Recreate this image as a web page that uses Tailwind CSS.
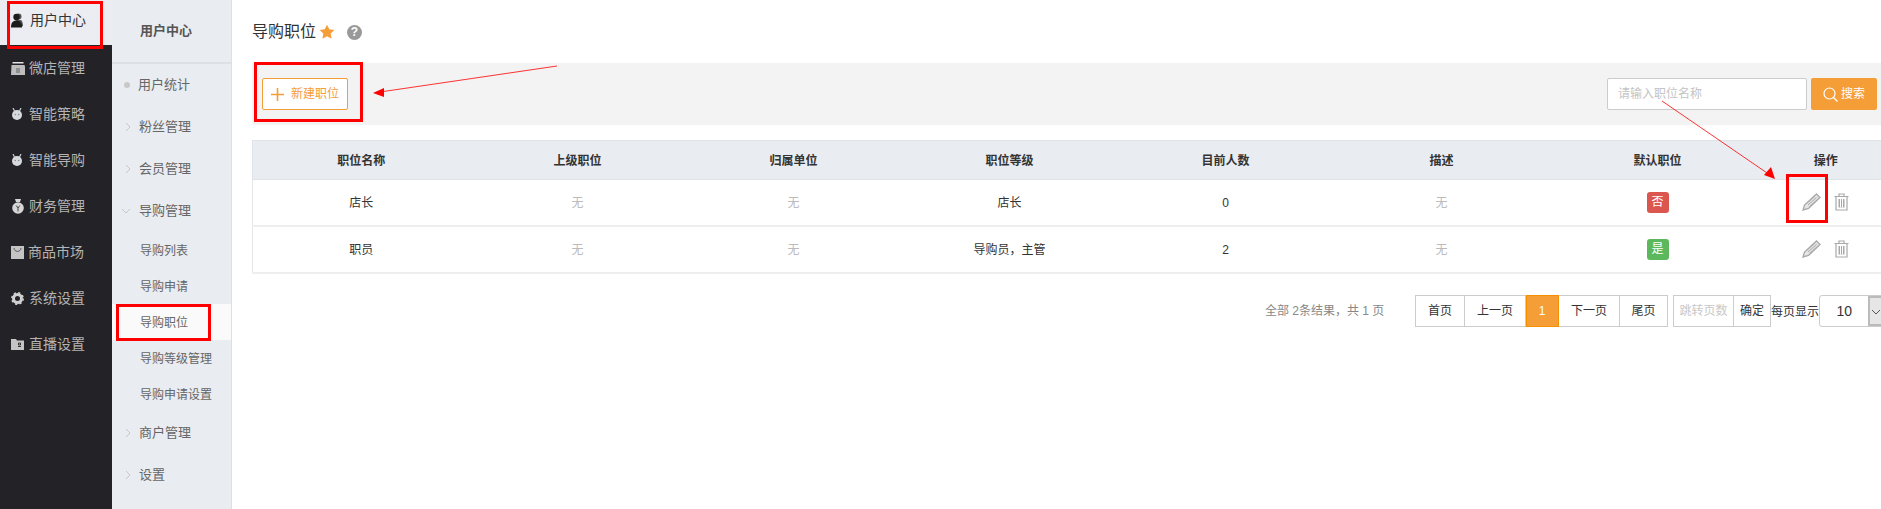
<!DOCTYPE html>
<html lang="zh-CN">
<head>
    <meta charset="UTF-8">
    <title>导购职位</title>
    <script src="https://cdn.jsdelivr.net/npm/@tailwindcss/browser@4"></script>
</head>
<body class="relative w-[1881px] h-[509px] overflow-hidden bg-white font-['Liberation_Sans','Noto_Sans_CJK_SC',sans-serif] text-[12px] text-[#333]">
<div class="flex h-[509px]">
    <!-- main nav -->
    <nav class="w-[112px] shrink-0 bg-[#232227] text-[14px] text-[#b4b4b4]">
        <div class="h-[45px] bg-[#ebedf2] flex items-center pl-[11px] pb-[5px] gap-[7px] text-[#333]">
            <svg class="w-[12px] h-[15px]" viewBox="0 0 12 15"><circle cx="7.500" cy="3.500" r="3" fill="#555"/><path d="M5 7h5c1.500 1 2 4 2 6l-2 1z" fill="#555"/><circle cx="5.500" cy="4" r="3.200" fill="#1c1c1c"/><path d="M0 14.500C0 9.500 2 7.500 5.500 7.500S11 9.500 11 14.500z" fill="#1c1c1c"/></svg>
            <span>用户中心</span>
        </div>
        <a class="h-[46px] flex items-center pl-[11px] gap-[4px]">
            <svg class="w-[14px] h-[13px]" viewBox="0 0 14 13"><path d="M1.500 0h11v1.500h-11z" fill="#e4e4e4"/><path d="M0.500 3h13l0.500 1.500v8.500H0z" fill="#bdbdbd"/><path d="M5 6h4v5H5z" fill="#8f8f8f"/></svg>
            <span>微店管理</span>
        </a>
        <a class="h-[46px] flex items-center pl-[12px] gap-[7px]">
            <svg class="w-[10px] h-[12px]" viewBox="0 0 10 12"><path d="M1 0l1.500 3M9 0L7.500 3" stroke="#c9ccd2" stroke-width="1.200"/><circle cx="5" cy="7" r="5" fill="#d6d9de"/><circle cx="3.300" cy="6.500" r=".8" fill="#8a8a8a"/><circle cx="6.700" cy="6.500" r=".8" fill="#8a8a8a"/></svg>
            <span>智能策略</span>
        </a>
        <a class="h-[46px] flex items-center pl-[12px] gap-[7px]">
            <svg class="w-[10px] h-[12px]" viewBox="0 0 10 12"><path d="M1 0l1.500 3M9 0L7.500 3" stroke="#c9ccd2" stroke-width="1.200"/><circle cx="5" cy="7" r="5" fill="#d6d9de"/><circle cx="3.300" cy="6.500" r=".8" fill="#8a8a8a"/><circle cx="6.700" cy="6.500" r=".8" fill="#8a8a8a"/></svg>
            <span>智能导购</span>
        </a>
        <a class="h-[46px] flex items-center pl-[12px] gap-[5px]">
            <svg class="w-[12px] h-[15px]" viewBox="0 0 12 15"><path d="M3 0h6L8 3H4z" fill="#d6d6d6"/><circle cx="6" cy="9" r="5.800" fill="#d6d6d6"/><path d="M4.200 6.500L6 9l1.800-2.500M6 9v3.500" stroke="#444" fill="none"/></svg>
            <span>财务管理</span>
        </a>
        <a class="h-[46px] flex items-center pl-[11px] gap-[4px]">
            <svg class="w-[13px] h-[13px]" viewBox="0 0 13 13"><path d="M0 0h13v13H0z" fill="#c4c4c4"/><path d="M3 2c0 4.500 7 4.500 7 0" stroke="#555" fill="none"/></svg>
            <span>商品市场</span>
        </a>
        <a class="h-[46px] flex items-center pl-[11px] gap-[5px]">
            <svg class="w-[13px] h-[13px]" viewBox="0 0 13 13"><circle cx="6.500" cy="6.500" r="4" fill="none" stroke="#d0d0d0" stroke-width="3"/><circle cx="6.500" cy="6.500" r="5.700" fill="none" stroke="#d0d0d0" stroke-width="1.500" stroke-dasharray="2.200 2.270"/></svg>
            <span>系统设置</span>
        </a>
        <a class="h-[46px] flex items-center pl-[11px] gap-[5px]">
            <svg class="w-[13px] h-[11px]" viewBox="0 0 13 11"><path d="M0 0h5l1 1.500h7V11H0z" fill="#c4c4c4"/><path d="M7.500 4h2v2h-2zM7 7.500h3" stroke="#333" fill="none"/></svg>
            <span>直播设置</span>
        </a>
    </nav>

    <!-- sub nav -->
    <aside class="w-[120px] shrink-0 bg-[#e9ecf1] border-r border-r-[#dcdfe4] text-[13px] text-[#666]">
        <div class="h-[64px] border-b-2 border-b-[#dde0e5] flex items-center pl-[28px] font-bold text-[#555]">用户中心</div>
        <div class="h-[42px] flex items-center pl-[12px] gap-[7px]"><span class="w-[6px] h-[6px] rounded-full bg-[#c8c8c8]"></span><span class="ml-[1px]">用户统计</span></div>
        <div class="h-[42px] flex items-center pl-[12px] gap-[7px]">
            <svg class="w-[8px] h-[10px]" viewBox="0 0 8 10"><path d="M2 1l4 4-4 4" fill="none" stroke="#c8c8c8"/></svg><span>粉丝管理</span>
        </div>
        <div class="h-[42px] flex items-center pl-[12px] gap-[7px]">
            <svg class="w-[8px] h-[10px]" viewBox="0 0 8 10"><path d="M2 1l4 4-4 4" fill="none" stroke="#c8c8c8"/></svg><span>会员管理</span>
        </div>
        <div class="h-[42px] flex items-center pl-[9px] gap-[7px]">
            <svg class="w-[10px] h-[8px] mr-[1px]" viewBox="0 0 10 8"><path d="M1 2l4 4 4-4" fill="none" stroke="#c8c8c8"/></svg><span>导购管理</span>
        </div>
        <div class="text-[12px]">
            <div class="h-[36px] flex items-center pl-[28px] pt-[2px]">导购列表</div>
            <div class="h-[36px] flex items-center pl-[28px] pt-[2px]">导购申请</div>
            <div class="h-[36px] flex items-center pl-[28px] pt-[2px] bg-[#fafafa]">导购职位</div>
            <div class="h-[36px] flex items-center pl-[28px] pt-[2px]">导购等级管理</div>
            <div class="h-[36px] flex items-center pl-[28px] pt-[2px]">导购申请设置</div>
        </div>
        <div class="h-[42px] flex items-center pl-[12px] gap-[7px]">
            <svg class="w-[8px] h-[10px]" viewBox="0 0 8 10"><path d="M2 1l4 4-4 4" fill="none" stroke="#c8c8c8"/></svg><span>商户管理</span>
        </div>
        <div class="h-[42px] flex items-center pl-[12px] gap-[7px]">
            <svg class="w-[8px] h-[10px]" viewBox="0 0 8 10"><path d="M2 1l4 4-4 4" fill="none" stroke="#c8c8c8"/></svg><span>设置</span>
        </div>
    </aside>

    <!-- content -->
    <main class="flex-1 min-w-0 pl-[20px]">
        <div class="h-[63px] flex items-center pt-[1px]">
            <h1 class="text-[16px] font-normal text-[#333]">导购职位</h1>
            <svg class="w-[16px] h-[16px] ml-[3px]" viewBox="0 0 24 24"><path d="M12 1l3.400 7 7.600 1-5.500 5.300 1.400 7.700L12 18.400 5.100 22l1.400-7.700L1 9l7.600-1z" fill="#f59d36"/></svg>
            <span class="ml-[12px] w-[15px] h-[15px] rounded-full bg-[#999] text-white font-bold text-[12px] leading-[15px] text-center">?</span>
        </div>

        <div class="h-[62px] bg-[#f3f3f3] flex items-center pl-[10px] pr-[4px]">
            <button class="w-[86px] h-[32px] bg-white border border-[#f59d36] rounded-[2px] flex items-center justify-center gap-[7px] text-[#f59d36]">
                <svg class="w-[13px] h-[13px]" viewBox="0 0 13 13"><path d="M6.500 0v13M0 6.500h13" stroke="#f59d36" stroke-width="1.600"/></svg>
                <span>新建职位</span>
            </button>
            <input class="ml-auto w-[200px] h-[32px] bg-white border border-[#ccc] rounded-[2px] px-[10px] text-[12px] placeholder:text-[#c4c4c4]" placeholder="请输入职位名称">
            <button class="ml-[4px] w-[66px] h-[32px] bg-[#f59d36] rounded-[2px] flex items-center justify-center gap-[3px] text-white">
                <svg class="w-[15px] h-[15px]" viewBox="0 0 15 15"><circle cx="6.500" cy="6.500" r="5.500" fill="none" stroke="#fff" stroke-width="1.200"/><path d="M10.500 10.500l4 4" stroke="#fff" stroke-width="1.200"/></svg>
                <span>搜索</span>
            </button>
        </div>

        <table class="mt-[15px] w-[1635px] table-fixed border-collapse text-center text-[12px]">
            <colgroup>
                <col class="w-[217px]"><col class="w-[216px]"><col class="w-[216px]"><col class="w-[216px]"><col class="w-[216px]"><col class="w-[216px]"><col class="w-[216px]"><col>
            </colgroup>
            <thead>
                <tr class="h-[39px] bg-[#e9ecf1] border border-[#dfe2e7] font-bold">
                    <th class="pt-px">职位名称</th><th class="pt-px">上级职位</th><th class="pt-px">归属单位</th><th class="pt-px">职位等级</th><th class="pt-px">目前人数</th><th class="pt-px">描述</th><th class="pt-px">默认职位</th><th class="pt-px">操作</th>
                </tr>
            </thead>
            <tbody>
                <tr class="h-[46px] border-b-2 border-b-[#eeeeee] border-l border-l-[#e6e6e6]">
                    <td class="pt-px">店长</td><td class="pt-px text-[#bbb]">无</td><td class="pt-px text-[#bbb]">无</td><td class="pt-px">店长</td><td class="pt-px">0</td><td class="pt-px text-[#bbb]">无</td>
                    <td><span class="inline-block w-[22px] h-[21px] leading-[21px] rounded-[3px] bg-[#dc5650] text-white">否</span></td>
                    <td>
                        <div class="flex items-center justify-center gap-[13px] mr-[2px]">
                            <svg class="w-[19px] h-[18px]" viewBox="0 0 19 18"><path d="M14.500 1l3.500 3.500L6.500 15.500 1 17l1.500-5z" fill="#e4e4e4" stroke="#a9a9a9" stroke-width="1.300"/><path d="M4.500 10.500L13 3M6 12L14.500 4.500M7.500 13.500L16 6" stroke="#a9a9a9"/></svg>
                            <svg class="w-[15px] h-[18px]" viewBox="0 0 15 18"><path d="M0.500 3.500h14M5 3V1h5v2M2 3.500v13.500h11V3.500" fill="none" stroke="#a9a9a9" stroke-width="1.200"/><path d="M4.500 6v8.500h6V6z" fill="#a9a9a9"/><path d="M6.500 6v8.500M8.500 6v8.500" stroke="#fff"/></svg>
                        </div>
                    </td>
                </tr>
                <tr class="h-[47px] border-b-2 border-b-[#eeeeee] border-l border-l-[#e6e6e6]">
                    <td class="pt-px">职员</td><td class="pt-px text-[#bbb]">无</td><td class="pt-px text-[#bbb]">无</td><td class="pt-px">导购员，主管</td><td class="pt-px">2</td><td class="pt-px text-[#bbb]">无</td>
                    <td><span class="inline-block w-[22px] h-[21px] leading-[21px] rounded-[3px] bg-[#5cb85c] text-white">是</span></td>
                    <td>
                        <div class="flex items-center justify-center gap-[13px] mr-[2px]">
                            <svg class="w-[19px] h-[18px]" viewBox="0 0 19 18"><path d="M14.500 1l3.500 3.500L6.500 15.500 1 17l1.500-5z" fill="#e4e4e4" stroke="#a9a9a9" stroke-width="1.300"/><path d="M4.500 10.500L13 3M6 12L14.500 4.500M7.500 13.500L16 6" stroke="#a9a9a9"/></svg>
                            <svg class="w-[15px] h-[18px]" viewBox="0 0 15 18"><path d="M0.500 3.500h14M5 3V1h5v2M2 3.500v13.500h11V3.500" fill="none" stroke="#a9a9a9" stroke-width="1.200"/><path d="M4.500 6v8.500h6V6z" fill="#a9a9a9"/><path d="M6.500 6v8.500M8.500 6v8.500" stroke="#fff"/></svg>
                        </div>
                    </td>
                </tr>
            </tbody>
        </table>

        <div class="mt-[21px] flex items-center h-[32px] pl-[1013px] whitespace-nowrap">
            <span class="w-[150px] shrink-0 text-[#888]">全部 2条结果，共 1 页</span>
            <div class="flex shrink-0 h-[32px] border border-[#ccc] divide-x divide-[#ccc] text-center leading-[30px]">
                <a class="w-[49px]">首页</a><a class="w-[61px]">上一页</a><a class="w-[33px] -my-px h-[32px] leading-[32px] bg-[#f59d36] text-white outline outline-[#f59000] -outline-offset-1">1</a><a class="w-[61px]">下一页</a><a class="w-[47px]">尾页</a>
            </div>
            <div class="ml-[5px] flex shrink-0 h-[32px] border border-[#ccc] divide-x divide-[#ccc] text-center leading-[30px]">
                <a class="w-[60px] text-[#c8c8c8]">跳转页数</a><a class="w-[36px]">确定</a>
            </div>
            <span class="w-[48px] shrink-0 pt-[2px]">每页显示</span>
            <div class="w-[80px] h-[32px] shrink-0 flex border border-[#ccc] rounded-l-[3px]">
                <span class="w-[49px] text-center text-[14px] leading-[30px]">10</span>
                <span class="w-[30px] bg-[#e6e6e6] border-2 border-[#bbb]">
                    <svg class="w-[10px] h-[8px] mt-[10px] ml-[1px]" viewBox="0 0 10 8"><path d="M1 2l4 4 4-4" fill="none" stroke="#555"/></svg>
                </span>
            </div>
        </div>
    </main>
</div>

<!-- red annotations drawn over the screenshot -->
<svg class="absolute inset-0 w-[1881px] h-[509px] pointer-events-none" viewBox="0 0 1881 509">
    <g fill="none" stroke="#ff0000" stroke-width="3">
        <rect x="8.500" y="2.500" width="93" height="45"/>
        <rect x="117.500" y="305.500" width="92" height="34"/>
        <rect x="255.500" y="63.500" width="106" height="57"/>
        <rect x="1787.500" y="175.500" width="39" height="46"/>
    </g>
    <path d="M557 66L380 92" stroke="#ff0000" stroke-width="0.800" fill="none"/>
    <path d="M373 93L384 88L384 97z" fill="#ff0000"/>
    <path d="M1662 101L1770 175" stroke="#ff0000" stroke-width="0.800" fill="none"/>
    <path d="M1775 179L1764 175L1771 167z" fill="#ff0000"/>
</svg>
</body>
</html>
